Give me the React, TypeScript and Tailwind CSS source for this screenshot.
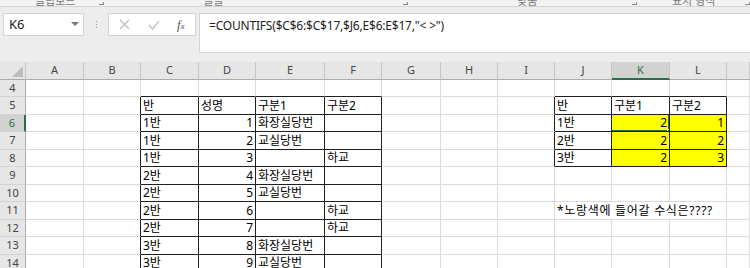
import React from "react";

const COLS = ["A", "B", "C", "D", "E", "F", "G", "H", "I", "J", "K", "L", "M"];
const ROWS = [4, 5, 6, 7, 8, 9, 10, 11, 12, 13, 14];

// sheet values, keyed by row then column letter
const data: Record<number, Record<string, string>> = {
  5: { C: "반", D: "성명", E: "구분1", F: "구분2", J: "반", K: "구분1", L: "구분2" },
  6: { C: "1반", D: "1", E: "화장실당번", J: "1반", K: "2", L: "1" },
  7: { C: "1반", D: "2", E: "교실당번", J: "2반", K: "2", L: "2" },
  8: { C: "1반", D: "3", F: "하교", J: "3반", K: "2", L: "3" },
  9: { C: "2반", D: "4", E: "화장실당번" },
  10: { C: "2반", D: "5", E: "교실당번" },
  11: { C: "2반", D: "6", F: "하교", J: "*노랑색에 들어갈 수식은????" },
  12: { C: "2반", D: "7", F: "하교" },
  13: { C: "3반", D: "8", E: "화장실당번" },
  14: { C: "3반", D: "9", E: "교실당번" },
};

const inMain = (r: number, c: number) => r >= 5 && r <= 14 && c >= 3 && c <= 6;
const inSummary = (r: number, c: number) => r >= 5 && r <= 8 && c >= 10 && c <= 12;
const isYellow = (r: number, c: number) => r >= 6 && r <= 8 && c >= 11 && c <= 12;

function SheetCell({ r, c }: { r: number; c: number }) {
  const col = COLS[c - 1];
  const text = data[r]?.[col] ?? "";
  const numeric = /^\d+$/.test(text);
  const blackRight = inMain(r, c) || inSummary(r, c) || (c === 2 && r >= 5) || (c === 9 && r >= 5 && r <= 8);
  const blackBottom = inMain(r, c) || inSummary(r, c) || (r === 4 && ((c >= 3 && c <= 6) || (c >= 10 && c <= 12)));
  const selected = r === 6 && c === 11;
  const wide = r === 11 && c === 10;

  return (
    <div
      className={[
        "relative flex items-end pb-[1px] whitespace-nowrap border-r border-b text-[12px] leading-[15px] text-black",
        blackRight ? "border-r-[#1f1f1f]" : "border-r-[#dadada]",
        blackBottom ? "border-b-[#1f1f1f]" : "border-b-[#dadada]",
        isYellow(r, c) ? "bg-[#ffff00]" : "bg-white",
        numeric ? "justify-end pr-[2px]" : "pl-[2px]",
        wide ? "col-span-3 tracking-[0.7px] text-[#222]" : "overflow-hidden",
      ].join(" ")}
    >
      {text}
      {selected && (
        <>
          <div className="absolute -left-[2px] -top-[2px] -right-px -bottom-px z-10 border-2 border-[#217346]" />
          <div className="absolute -right-[4px] -bottom-[4px] z-20 h-[6px] w-[6px] border border-white bg-[#217346]" />
        </>
      )}
    </div>
  );
}

function RibbonStrip() {
  // only the bottom sliver of the ribbon's group labels is in view
  return (
    <div className="flex h-[7px] items-end overflow-hidden border-b border-[#d6d6d6] bg-[#f3f3f3] text-[11px] leading-[11px] text-[#777]">
      <span className="ml-[35px] w-[75px]">클립보드</span>
      <span className="mb-[1px] h-[3px] w-[6px] border-b border-r border-[#888]" />
      <span className="ml-[99px] w-[233px]">글꼴</span>
      <span className="mb-[1px] h-[3px] w-[6px] border-b border-r border-[#888]" />
      <span className="ml-[109px] w-[134px]">맞춤</span>
      <span className="mb-[1px] h-[3px] w-[6px] border-b border-r border-[#888]" />
      <span className="ml-[35px] w-[85px]">표시 형식</span>
      <span className="mb-[1px] h-[3px] w-[6px] border-b border-r border-[#888]" />
    </div>
  );
}

function FormulaBar() {
  return (
    <div className="flex h-[55px] items-start bg-[#ededed] pt-[6px]">
      <div className="ml-[3px] flex h-[23px] w-[81px] items-center justify-between border border-[#d4d4d4] bg-white pl-[5px] pr-[4px] text-[13px] text-[#222]">
        <span>K6</span>
        <svg width="8" height="5" viewBox="0 0 8 5">
          <path d="M0 0h8L4 4z" fill="#777" />
        </svg>
      </div>
      <div className="ml-[11px] flex h-[23px] w-[3px] flex-col items-center justify-center gap-[2px]">
        <span className="h-[1px] w-[1px] bg-[#999]" />
        <span className="h-[1px] w-[1px] bg-[#999]" />
        <span className="h-[1px] w-[1px] bg-[#999]" />
      </div>
      <div className="ml-[10px] flex h-[23px] w-[88px] items-center border border-[#d4d4d4] bg-white">
        <svg className="ml-[10px]" width="11" height="11" viewBox="0 0 11 11">
          <path d="M1 1l9 9M10 1l-9 9" stroke="#bdbdbd" strokeWidth="1.2" />
        </svg>
        <svg className="ml-[18px]" width="12" height="10" viewBox="0 0 12 10">
          <path d="M1 5l3.5 4L11 1" stroke="#bdbdbd" strokeWidth="1.2" fill="none" />
        </svg>
        <span className="ml-[17px] font-['Liberation_Serif',serif] text-[13px] italic text-[#555]">
          f<span className="text-[9px]">x</span>
        </span>
      </div>
      <div className="ml-[3px] h-[40px] flex-1 border border-r-0 border-[#d4d4d4] bg-white pl-[9px] pt-[3px] font-['Noto_Sans',sans-serif] text-[12px] tracking-[-0.2px] text-[#222]">
        {'=COUNTIFS($C$6:$C$17,$J6,E$6:E$17,"<'}
        <span className="ml-[3px]">{'>")'}</span>
      </div>
    </div>
  );
}

export default function App() {
  return (
    <div className="h-[268px] w-[750px] overflow-hidden bg-[#ededed] font-['Noto_Sans','Noto_Sans_CJK_KR',sans-serif]">
      <RibbonStrip />
      <FormulaBar />
      {/* row header + A..L fixed, M takes the rest */}
      <div className="grid grid-cols-[26px_58px_57px_58px_57px_69px_57px_59px_57px_57px_57px_58px_57px_1fr] grid-rows-[18px_17px_18px_17px_18px_17px_18px_17px_18px_17px_18px_17px]">
        <div className="relative border-r border-b border-r-[#c6c6c6] border-b-[#ababab] bg-[#e6e6e6]">
          <svg className="absolute right-[2px] bottom-[2px]" width="11" height="11" viewBox="0 0 11 11">
            <path d="M11 0v11H0z" fill="#bcbcbc" />
          </svg>
        </div>
        {COLS.map((col) => (
          <div
            key={col}
            className={
              col === "K"
                ? "flex items-center justify-center border-r border-b-2 border-r-[#c6c6c6] border-b-[#217346] bg-[#d2d2d2] text-[11px] text-[#217346]"
                : "flex items-center justify-center border-r border-b border-r-[#c6c6c6] border-b-[#ababab] bg-[#e6e6e6] text-[11px] text-[#444]"
            }
          >
            {/* M's label sits past the window edge */}
            {col === "M" ? "" : col}
          </div>
        ))}

        {ROWS.map((r) => (
          <React.Fragment key={r}>
            <div
              className={
                r === 6
                  ? "flex items-center justify-center border-r-2 border-b border-r-[#217346] border-b-[#d4d4d4] bg-[#d2d2d2] text-[11px] text-[#217346]"
                  : "flex items-center justify-center border-r border-b border-r-[#ababab] border-b-[#d4d4d4] bg-[#e6e6e6] text-[11px] text-[#444]"
              }
            >
              {r}
            </div>
            {COLS.map((_, i) => {
              const c = i + 1;
              if (r === 11 && (c === 11 || c === 12)) return null;
              return <SheetCell key={c} r={r} c={c} />;
            })}
          </React.Fragment>
        ))}
      </div>
    </div>
  );
}
